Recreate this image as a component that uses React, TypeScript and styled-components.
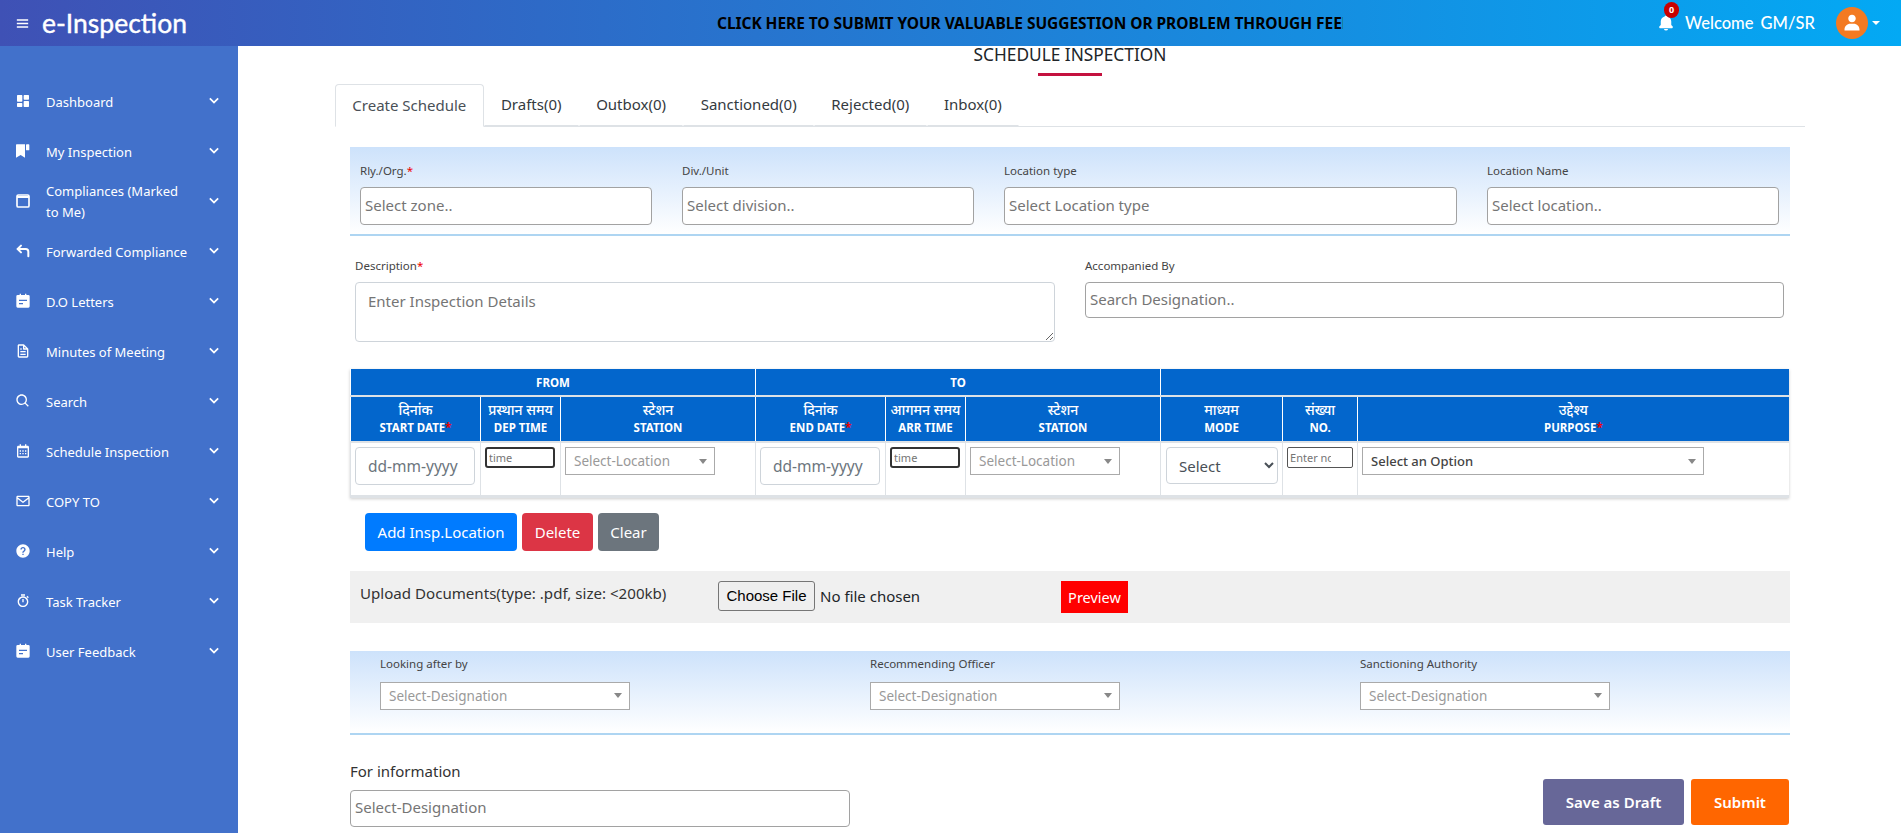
import React from 'react'
import styled, { createGlobalStyle } from 'styled-components'
import { CornerUpLeft } from 'lucide-react'
import {
  BiChevronDown,
  BiCalendar,
  BiEnvelope,
  BiFile,
  BiMenu,
  BiSearch,
  BiSolidBell,
  BiSolidDashboard,
  BiSolidHelpCircle,
  BiSolidUser,
  BiStopwatch
} from 'react-icons/bi'

const FONT = '"Noto Sans", "Noto Sans Devanagari", "Liberation Sans", sans-serif'

const GlobalStyle = createGlobalStyle`
  * {
    box-sizing: border-box;
  }
  html, body {
    margin: 0;
    height: 100%;
    overflow: hidden;
    background: #fff;
    font-family: ${FONT};
    color: #212529;
  }
  input, textarea, select, button {
    font-family: ${FONT};
  }
  input::placeholder, textarea::placeholder {
    color: #757575;
    opacity: 1;
  }
`

const Page = styled.div`
  display: flex;
  flex-direction: column;
  height: 833px;
  overflow: hidden;
`

const Header = styled.header`
  flex: 0 0 46px;
  display: flex;
  align-items: center;
  color: #fff;
  background: linear-gradient(to right, #3f51b5, #03a9f4);
`

const MenuButton = styled.span`
  display: flex;
  width: 42px;
  padding-left: 14px;
  font-size: 17px;
`

const Logo = styled.span`
  width: 675px;
  font-family: "Lato", sans-serif;
  font-size: 26.5px;
  font-weight: 400;
  -webkit-text-stroke: 0.4px #fff;
`

const Notice = styled.div`
  width: 626px;
  overflow: hidden;
  white-space: nowrap;
  color: #000;
  font-size: 15.5px;
  font-weight: 700;
  letter-spacing: -0.05px;
`

const UserArea = styled.div`
  flex: 1;
  display: flex;
  align-items: center;
  padding-left: 314px;
`

const Bell = styled.span`
  position: relative;
  display: flex;
  width: 28px;
  font-size: 18px;
`

const Badge = styled.span`
  position: absolute;
  top: -12px;
  left: 7px;
  width: 15px;
  height: 16px;
  border-radius: 8px;
  background: #c80000;
  color: #fff;
  font-size: 9px;
  font-weight: 700;
  line-height: 16px;
  text-align: center;
`

const Welcome = styled.span`
  width: 151px;
  font-family: "Lato", sans-serif;
  font-size: 16.5px;
  font-weight: 500;
  word-spacing: 3px;
`

const Avatar = styled.span`
  display: flex;
  align-items: center;
  justify-content: center;
  width: 32px;
  height: 32px;
  border-radius: 50%;
  background: #f37a21;
  font-size: 20px;
`

const Caret = styled.span`
  width: 0;
  height: 0;
  margin-left: 4px;
  border-top: 4px solid #fff;
  border-left: 4px solid transparent;
  border-right: 4px solid transparent;
`

const Body = styled.div`
  flex: 1;
  display: flex;
  min-height: 0;
`

const Sidebar = styled.nav`
  flex: 0 0 238px;
  padding-top: 31px;
  background: #4271cb;
  color: #fff;
`

const NavItem = styled.div`
  display: grid;
  grid-template-columns: 31px 1fr 22px;
  align-items: center;
  height: 50px;
  padding: 0 13px 0 15px;
  font-size: 13px;
  line-height: 21px;
`

const NavIcon = styled.span`
  display: flex;
  margin-top: -3px;
  font-size: 16px;
`

const NavLabel = styled.span`
  padding-right: 13px;
`

const NavChevron = styled.span`
  display: flex;
  justify-content: center;
  margin-top: -4px;
  font-size: 20px;
  stroke-width: 0.7;
  stroke: #fff;
`

const Main = styled.main`
  flex: 1;
  min-width: 0;
  padding: 0 96px 0 97px;
`

const Title = styled.h1`
  margin: 0;
  height: 27px;
  color: #212529;
  font-size: 17.3px;
  font-weight: 400;
  line-height: 17px;
  text-align: center;
`

const TitleRule = styled.div`
  width: 64px;
  height: 3px;
  margin: 0 auto 8px;
  background: #c4123f;
`

const Tabs = styled.div`
  display: flex;
  height: 43px;
  border-bottom: 1px solid #dee2e6;
`

const Tab = styled.div<{ $active?: boolean }>`
  display: flex;
  align-items: center;
  height: ${p => (p.$active ? '43px' : '42px')};
  padding: 0 16.3px 2px;
  border: 1px solid ${p => (p.$active ? '#dee2e6' : 'transparent')};
  border-bottom: 1px solid ${p => (p.$active ? '#fff' : '#dee2e6')};
  border-radius: 4px 4px 0 0;
  color: ${p => (p.$active ? '#495057' : '#343a40')};
  font-size: 15px;
`

const Form = styled.div`
  margin: 0 15px;
`

const BluePanel = styled.section`
  margin-top: 20px;
  background: linear-gradient(to bottom, #cde2fb, #fff);
  border-bottom: 2px solid #aed5f2;
`

const LocationGrid = styled(BluePanel)`
  display: grid;
  grid-template-columns: 292px 292px 453px 292px;
  column-gap: 30px;
  height: 89px;
  padding: 16px 10px 0;
`

const FieldLabel = styled.label`
  display: block;
  height: 16px;
  margin-bottom: 8px;
  color: #444;
  font-size: 11.5px;
  line-height: 16px;
`

const Star = styled.span`
  color: #e00;
`

const TextBox = styled.input<{ $h?: number }>`
  display: block;
  width: 100%;
  height: ${p => p.$h ?? 38}px;
  padding: 0 4px 2px;
  background: #fff;
  border: 1px solid #a2a2a2;
  border-radius: 4px;
  font-size: 15px;
  outline: none;
`

const DetailsGrid = styled.div`
  display: grid;
  grid-template-columns: 700px 699px;
  column-gap: 30px;
  padding: 22px 0 0 5px;
`

const DetailsArea = styled.textarea`
  display: block;
  width: 100%;
  height: 60px;
  padding: 6px 12px;
  border: 1px solid #ced4da;
  border-radius: 4px;
  font-size: 15px;
  line-height: 24px;
  outline: none;
`

const ScheduleTable = styled.table`
  width: 1438px;
  margin: 27px 0 0;
  border-collapse: collapse;
  table-layout: fixed;
  border-bottom: 3px solid #dee2e6;
  box-shadow: 0 1px 3px rgba(0, 0, 0, 0.2);
`

const GroupHead = styled.th`
  height: 27px;
  padding: 0;
  background: #0366cc;
  border-left: 1px solid #fff;
  border-bottom: 2px solid #dee2e6;
  color: #fff;
  font-size: 11.5px;
  font-weight: 700;
`

const ColumnHead = styled.th`
  height: 46px;
  padding: 0;
  background: #0366cc;
  border-left: 1px solid #fff;
  border-bottom: 2px solid #dee2e6;
  color: #fff;
  font-size: 11.5px;
  font-weight: 700;
  line-height: 18px;
`

const HindiLine = styled.div`
  font-size: 14px;
  font-weight: 500;
`

const Cell = styled.td`
  height: 54px;
  padding: 4px;
  vertical-align: top;
  border-left: 1px solid #dee2e6;
`

const CellBox = styled.input`
  display: block;
  width: 120px;
  height: 38px;
  padding: 0 12px;
  border: 1px solid #ced4da;
  border-radius: 4px;
  font-size: 15.5px;
  outline: none;
  &::placeholder {
    color: #6c757d;
  }
`

const TimeBox = styled.input`
  display: block;
  width: 70px;
  height: 21px;
  padding: 0 2px;
  border: 2px solid #333;
  border-radius: 3px;
  font-size: 11px;
  outline: none;
`

const CountBox = styled(TimeBox)`
  width: 66px;
  padding-right: 21px;
  border: 1px solid #555;
  border-radius: 2px;
`

const ModeSelect = styled.select`
  display: block;
  width: 112px;
  height: 37px;
  margin-left: 1px;
  padding: 0 8px;
  background: #fff;
  border: 1px solid #ced4da;
  border-radius: 4px;
  color: #495057;
  font-size: 15px;
`

const DropBox = styled.div<{ $w: number; $filled?: boolean }>`
  display: flex;
  align-items: center;
  justify-content: space-between;
  width: ${p => p.$w}px;
  height: 28px;
  padding: 0 7px 0 8px;
  background: #fff;
  border: 1px solid #aaa;
  color: ${p => (p.$filled ? '#444' : '#999')};
  font-size: ${p => (p.$filled ? 13 : 13.5)}px;
  font-weight: ${p => (p.$filled ? 500 : 400)};
`

const DropArrow = styled.span`
  width: 0;
  height: 0;
  border-top: 5px solid #888;
  border-left: 4px solid transparent;
  border-right: 4px solid transparent;
`

const ActionRow = styled.div`
  display: flex;
  gap: 5px;
  margin: 15px 0 0 15px;
`

const ActionButton = styled.button<{ $bg: string; $w: number }>`
  width: ${p => p.$w}px;
  height: 38px;
  padding: 0;
  background: ${p => p.$bg};
  border: 0;
  border-radius: 4px;
  color: #fff;
  font-size: 15px;
`

const UploadBar = styled.div`
  display: flex;
  align-items: flex-start;
  height: 52px;
  margin-top: 20px;
  padding: 10px 0 0 10px;
  background: #f0f0f0;
`

const UploadLabel = styled.span`
  width: 358px;
  font-size: 15.1px;
  line-height: 24px;
  color: #333;
`

const FileInput = styled.input`
  width: 343px;
  font-size: 15px;
  &::file-selector-button {
    height: 30px;
    margin-right: 5px;
    padding: 0 7.5px;
    font-size: 15px;
    background: #efefef;
    border: 1px solid #767676;
    border-radius: 3px;
    color: #000;
  }
`

const PreviewButton = styled.button`
  width: 67px;
  height: 32px;
  padding: 0;
  background: #f00;
  border: 0;
  color: #fff;
  font-size: 14.5px;
`

const OfficerGrid = styled(BluePanel)`
  display: grid;
  grid-template-columns: 490px 490px 1fr;
  margin-top: 28px;
  height: 84px;
  padding: 5px 0 0 30px;
`

const OfficerLabel = styled(FieldLabel)`
  margin-bottom: 10px;
`

const BottomRow = styled.div`
  display: flex;
  justify-content: space-between;
`

const InfoBlock = styled.div`
  width: 500px;
  padding-top: 26px;
`

const InfoLabel = styled.label`
  display: block;
  margin-bottom: 9px;
  color: #333;
  font-size: 15px;
  line-height: 20px;
`

const SubmitRow = styled.div`
  display: flex;
  gap: 7px;
  margin: 44px 1px 0 0;
`

const SubmitButton = styled.button<{ $bg: string; $w: number }>`
  width: ${p => p.$w}px;
  height: 46px;
  padding: 0;
  background: ${p => p.$bg};
  border: 0;
  border-radius: 3px;
  color: #fff;
  font-size: 15px;
  font-weight: 600;
`

const BookmarkTagIcon = () => (
  <svg width="1em" height="1em" viewBox="0 0 24 24" fill="currentColor">
    <path d="M1.500 3a1 1 0 0 1 1-1H15v20l-6.500-4L1.500 22z" />
    <rect x="16.500" y="2" width="5" height="9" rx="1" />
  </svg>
)

const WindowIcon = () => (
  <svg width="1em" height="1em" viewBox="0 0 24 24" fill="none" stroke="currentColor" strokeWidth="2.500">
    <rect x="3" y="3" width="18" height="18" rx="2" />
    <path d="M3 6h18" strokeWidth="3" />
  </svg>
)

const NoteIcon = () => (
  <svg width="1em" height="1em" viewBox="0 0 24 24" fill="currentColor">
    <path d="M7 1h2v2h6V1h2v2h3a2 2 0 0 1 2 2v15a2 2 0 0 1-2 2H4a2 2 0 0 1-2-2V5a2 2 0 0 1 2-2h3z" />
    <path d="M6 10h12v2H6zM6 15h6v2H6z" fill="#4271cb" />
  </svg>
)

const navItems: Array<{ label: string; icon: React.ReactNode }> = [
  { label: 'Dashboard', icon: <BiSolidDashboard /> },
  { label: 'My Inspection', icon: <BookmarkTagIcon /> },
  { label: 'Compliances (Marked to Me)', icon: <WindowIcon /> },
  { label: 'Forwarded Compliance', icon: <CornerUpLeft size="1em" strokeWidth={3} /> },
  { label: 'D.O Letters', icon: <NoteIcon /> },
  { label: 'Minutes of Meeting', icon: <BiFile /> },
  { label: 'Search', icon: <BiSearch /> },
  { label: 'Schedule Inspection', icon: <BiCalendar /> },
  { label: 'COPY TO', icon: <BiEnvelope /> },
  { label: 'Help', icon: <BiSolidHelpCircle /> },
  { label: 'Task Tracker', icon: <BiStopwatch /> },
  { label: 'User Feedback', icon: <NoteIcon /> }
]

const tabs = ['Create Schedule', 'Drafts(0)', 'Outbox(0)', 'Sanctioned(0)', 'Rejected(0)', 'Inbox(0)']

const locationFields = [
  { label: 'Rly./Org.', required: true, placeholder: 'Select zone..' },
  { label: 'Div./Unit', placeholder: 'Select division..' },
  { label: 'Location type', placeholder: 'Select Location type' },
  { label: 'Location Name', placeholder: 'Select location..' }
]

const columns = [
  { width: 130, hi: 'दिनांक', en: 'START DATE', required: true },
  { width: 80, hi: 'प्रस्थान समय', en: 'DEP TIME' },
  { width: 195, hi: 'स्टेशन', en: 'STATION' },
  { width: 130, hi: 'दिनांक', en: 'END DATE', required: true },
  { width: 80, hi: 'आगमन समय', en: 'ARR TIME' },
  { width: 195, hi: 'स्टेशन', en: 'STATION' },
  { width: 122, hi: 'माध्यम', en: 'MODE' },
  { width: 75, hi: 'संख्या', en: 'NO.' },
  { width: 431, hi: 'उद्देश्य', en: 'PURPOSE', required: true }
]

const officers = ['Looking after by', 'Recommending Officer', 'Sanctioning Authority']

function Dropdown({ width, text, filled }: { width: number; text: string; filled?: boolean }) {
  return (
    <DropBox $w={width} $filled={filled}>
      {text}
      <DropArrow />
    </DropBox>
  )
}

function App() {
  return (
    <Page>
      <GlobalStyle />
      <Header>
        <MenuButton>
          <BiMenu />
        </MenuButton>
        <Logo>e-Inspection</Logo>
        <Notice>CLICK HERE TO SUBMIT YOUR VALUABLE SUGGESTION OR PROBLEM THROUGH FEEDBACK</Notice>
        <UserArea>
          <Bell>
            <BiSolidBell />
            <Badge>0</Badge>
          </Bell>
          <Welcome>Welcome GM/SR</Welcome>
          <Avatar>
            <BiSolidUser />
          </Avatar>
          <Caret />
        </UserArea>
      </Header>
      <Body>
        <Sidebar>
          {navItems.map(item => (
            <NavItem key={item.label}>
              <NavIcon>{item.icon}</NavIcon>
              <NavLabel>{item.label}</NavLabel>
              <NavChevron>
                <BiChevronDown />
              </NavChevron>
            </NavItem>
          ))}
        </Sidebar>
        <Main>
          <Title>SCHEDULE INSPECTION</Title>
          <TitleRule />
          <Tabs>
            {tabs.map((tab, i) => (
              <Tab key={tab} $active={i === 0}>
                {tab}
              </Tab>
            ))}
          </Tabs>
          <Form>
            <LocationGrid>
              {locationFields.map(field => (
                <div key={field.label}>
                  <FieldLabel>
                    {field.label}
                    {field.required && <Star>*</Star>}
                  </FieldLabel>
                  <TextBox placeholder={field.placeholder} />
                </div>
              ))}
            </LocationGrid>
            <DetailsGrid>
              <div>
                <FieldLabel>
                  Description<Star>*</Star>
                </FieldLabel>
                <DetailsArea placeholder="Enter Inspection Details" />
              </div>
              <div>
                <FieldLabel>Accompanied By</FieldLabel>
                <TextBox $h={36} placeholder="Search Designation.." />
              </div>
            </DetailsGrid>
            <ScheduleTable>
              <colgroup>
                {columns.map((col, i) => (
                  <col key={i} style={{ width: col.width }} />
                ))}
              </colgroup>
              <thead>
                <tr>
                  <GroupHead colSpan={3}>FROM</GroupHead>
                  <GroupHead colSpan={3}>TO</GroupHead>
                  <GroupHead colSpan={3} />
                </tr>
                <tr>
                  {columns.map((col, i) => (
                    <ColumnHead key={i}>
                      <HindiLine>{col.hi}</HindiLine>
                      {col.en}
                      {col.required && <Star>*</Star>}
                    </ColumnHead>
                  ))}
                </tr>
              </thead>
              <tbody>
                <tr>
                  <Cell>
                    <CellBox placeholder="dd-mm-yyyy" />
                  </Cell>
                  <Cell>
                    <TimeBox placeholder="time" />
                  </Cell>
                  <Cell>
                    <Dropdown width={150} text="Select-Location" />
                  </Cell>
                  <Cell>
                    <CellBox placeholder="dd-mm-yyyy" />
                  </Cell>
                  <Cell>
                    <TimeBox placeholder="time" />
                  </Cell>
                  <Cell>
                    <Dropdown width={150} text="Select-Location" />
                  </Cell>
                  <Cell>
                    <ModeSelect defaultValue="">
                      <option value="">Select</option>
                    </ModeSelect>
                  </Cell>
                  <Cell>
                    <CountBox placeholder="Enter no" />
                  </Cell>
                  <Cell>
                    <Dropdown width={342} text="Select an Option" filled />
                  </Cell>
                </tr>
              </tbody>
            </ScheduleTable>
            <ActionRow>
              <ActionButton $bg="#007bff" $w={152}>Add Insp.Location</ActionButton>
              <ActionButton $bg="#dc3545" $w={71}>Delete</ActionButton>
              <ActionButton $bg="#6c757d" $w={61}>Clear</ActionButton>
            </ActionRow>
            <UploadBar>
              <UploadLabel>Upload Documents(type: .pdf, size: &lt;200kb)</UploadLabel>
              <FileInput type="file" />
              <PreviewButton>Preview</PreviewButton>
            </UploadBar>
            <OfficerGrid>
              {officers.map(name => (
                <div key={name}>
                  <OfficerLabel>{name}</OfficerLabel>
                  <Dropdown width={250} text="Select-Designation" />
                </div>
              ))}
            </OfficerGrid>
            <BottomRow>
              <InfoBlock>
                <InfoLabel>For information</InfoLabel>
                <TextBox $h={37} placeholder="Select-Designation" />
              </InfoBlock>
              <SubmitRow>
                <SubmitButton $bg="#676798" $w={141}>
                  Save as Draft
                </SubmitButton>
                <SubmitButton $bg="#ff6600" $w={98}>
                  Submit
                </SubmitButton>
              </SubmitRow>
            </BottomRow>
          </Form>
        </Main>
      </Body>
    </Page>
  )
}

export default App
